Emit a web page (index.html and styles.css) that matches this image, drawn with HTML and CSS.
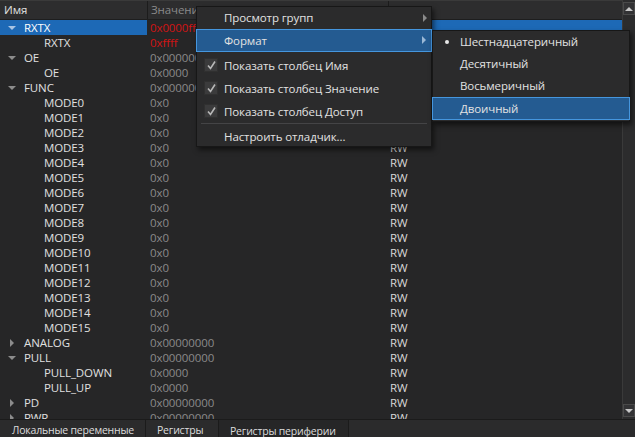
FILE: index.html
```html
<!DOCTYPE html>
<html>
<head>
<meta charset="utf-8">
<link rel="stylesheet" href="styles.css">
</head>
<body>
<div class="window">
  <div class="tree">
    <div class="main">
      <div class="header">
        <div class="hcell c-name">Имя</div>
        <div class="hcell c-val">Значение</div>
        <div class="hcell c-acc">Доступ</div>
      </div>
      <div class="rows">
        <div class="row sel"><div class="cell c-name l0"><span class="arr down"></span>RXTX</div><div class="cell c-val red">0x0000ffff</div><div class="cell c-acc">RW</div></div>
        <div class="row"><div class="cell c-name l1">RXTX</div><div class="cell c-val red">0xffff</div><div class="cell c-acc">RW</div></div>
        <div class="row"><div class="cell c-name l0"><span class="arr down"></span>OE</div><div class="cell c-val">0x00000000</div><div class="cell c-acc">RW</div></div>
        <div class="row"><div class="cell c-name l1">OE</div><div class="cell c-val">0x0000</div><div class="cell c-acc">RW</div></div>
        <div class="row"><div class="cell c-name l0"><span class="arr down"></span>FUNC</div><div class="cell c-val">0x00000000</div><div class="cell c-acc">RW</div></div>
        <div class="row"><div class="cell c-name l1">MODE0</div><div class="cell c-val">0x0</div><div class="cell c-acc">RW</div></div>
        <div class="row"><div class="cell c-name l1">MODE1</div><div class="cell c-val">0x0</div><div class="cell c-acc">RW</div></div>
        <div class="row"><div class="cell c-name l1">MODE2</div><div class="cell c-val">0x0</div><div class="cell c-acc">RW</div></div>
        <div class="row"><div class="cell c-name l1">MODE3</div><div class="cell c-val">0x0</div><div class="cell c-acc">RW</div></div>
        <div class="row"><div class="cell c-name l1">MODE4</div><div class="cell c-val">0x0</div><div class="cell c-acc">RW</div></div>
        <div class="row"><div class="cell c-name l1">MODE5</div><div class="cell c-val">0x0</div><div class="cell c-acc">RW</div></div>
        <div class="row"><div class="cell c-name l1">MODE6</div><div class="cell c-val">0x0</div><div class="cell c-acc">RW</div></div>
        <div class="row"><div class="cell c-name l1">MODE7</div><div class="cell c-val">0x0</div><div class="cell c-acc">RW</div></div>
        <div class="row"><div class="cell c-name l1">MODE8</div><div class="cell c-val">0x0</div><div class="cell c-acc">RW</div></div>
        <div class="row"><div class="cell c-name l1">MODE9</div><div class="cell c-val">0x0</div><div class="cell c-acc">RW</div></div>
        <div class="row"><div class="cell c-name l1">MODE10</div><div class="cell c-val">0x0</div><div class="cell c-acc">RW</div></div>
        <div class="row"><div class="cell c-name l1">MODE11</div><div class="cell c-val">0x0</div><div class="cell c-acc">RW</div></div>
        <div class="row"><div class="cell c-name l1">MODE12</div><div class="cell c-val">0x0</div><div class="cell c-acc">RW</div></div>
        <div class="row"><div class="cell c-name l1">MODE13</div><div class="cell c-val">0x0</div><div class="cell c-acc">RW</div></div>
        <div class="row"><div class="cell c-name l1">MODE14</div><div class="cell c-val">0x0</div><div class="cell c-acc">RW</div></div>
        <div class="row"><div class="cell c-name l1">MODE15</div><div class="cell c-val">0x0</div><div class="cell c-acc">RW</div></div>
        <div class="row"><div class="cell c-name l0"><span class="arr right"></span>ANALOG</div><div class="cell c-val">0x00000000</div><div class="cell c-acc">RW</div></div>
        <div class="row"><div class="cell c-name l0"><span class="arr down"></span>PULL</div><div class="cell c-val">0x00000000</div><div class="cell c-acc">RW</div></div>
        <div class="row"><div class="cell c-name l1">PULL_DOWN</div><div class="cell c-val">0x0000</div><div class="cell c-acc">RW</div></div>
        <div class="row"><div class="cell c-name l1">PULL_UP</div><div class="cell c-val">0x0000</div><div class="cell c-acc">RW</div></div>
        <div class="row"><div class="cell c-name l0"><span class="arr right"></span>PD</div><div class="cell c-val">0x00000000</div><div class="cell c-acc">RW</div></div>
        <div class="row"><div class="cell c-name l0"><span class="arr right"></span>PWR</div><div class="cell c-val">0x00000000</div><div class="cell c-acc">RW</div></div>
      </div>
    </div>
    <div class="scrollbar">
      <div class="sbtn"><span class="tri-up"></span></div>
      <div class="track"></div>
      <div class="sbtn"><span class="tri-down"></span></div>
    </div>
  </div>
  <div class="tabs">
    <div class="tab t1">Локальные переменные</div>
    <div class="tab t2">Регистры</div>
    <div class="tab t3 active">Регистры периферии</div>
    <div class="tab-rest"></div>
  </div>

  <div class="menu">
    <div class="mi h22">Просмотр групп<span class="sub-arr"></span></div>
    <div class="mi h23 hl">Формат<span class="sub-arr"></span></div>
    <div class="mi h23 gap"><span class="chk"><svg width="11" height="11" viewBox="0 0 11 11"><path d="M2 5.5 L4.5 8.5 L9 1.5" fill="none" stroke="#b8b8b8" stroke-width="1.6"/></svg></span>Показать столбец Имя</div>
    <div class="mi h23"><span class="chk"><svg width="11" height="11" viewBox="0 0 11 11"><path d="M2 5.5 L4.5 8.5 L9 1.5" fill="none" stroke="#b8b8b8" stroke-width="1.6"/></svg></span>Показать столбец Значение</div>
    <div class="mi h23"><span class="chk"><svg width="11" height="11" viewBox="0 0 11 11"><path d="M2 5.5 L4.5 8.5 L9 1.5" fill="none" stroke="#b8b8b8" stroke-width="1.6"/></svg></span>Показать столбец Доступ</div>
    <div class="sep"></div>
    <div class="mi h22">Настроить отладчик...</div>
  </div>

  <div class="submenu">
    <div class="mi h22"><span class="dot"></span>Шестнадцатеричный</div>
    <div class="mi h22">Десятичный</div>
    <div class="mi h22">Восьмеричный</div>
    <div class="mi h23 hl">Двоичный</div>
  </div>
</div>
</body>
</html>
```

FILE: styles.css
```css
* { box-sizing: border-box; }
html, body {
  margin: 0;
  padding: 0;
  background: #262627;
  overflow: hidden;
}
body {
  font-family: "Open Sans", "Noto Sans", sans-serif;
  font-size: 11.5px;
  letter-spacing: -0.1px;
  color: #dcdcdc;
}
.window {
  position: relative;
  width: 635px;
  height: 437px;
  display: flex;
  flex-direction: column;
}
.tree {
  height: 420px;
  display: flex;
  border-bottom: 1px solid #1b1b1b;
}
.main {
  flex: 1;
  overflow: hidden;
  display: flex;
  flex-direction: column;
}
.header {
  height: 20px;
  display: grid;
  grid-template-columns: 147px 241px 1fr;
  background: #2d2d2e;
  border-top: 1px solid #3a3a3a;
  border-bottom: 1px solid #1e1e1e;
}
.hcell {
  line-height: 18px;
  padding-left: 4px;
  white-space: nowrap;
  overflow: hidden;
  color: #e2e2e2;
}
.hcell + .hcell {
  border-left: 1px solid #1c1c1c;
  padding-left: 3px;
}
.rows {
  display: flex;
  flex-direction: column;
}
.row {
  height: 15px;
  display: grid;
  grid-template-columns: 147px 241px 1fr;
  line-height: 15px;
  white-space: nowrap;
}
.cell { overflow: hidden; }
.c-name { color: #e0e0e0; position: relative; }
.l0 { padding-left: 24px; }
.l1 { padding-left: 44px; }
.c-val { color: #8a8a8a; padding-left: 3px; }
.c-val.red { color: #d21414; }
.c-acc { color: #d8d8d8; padding-left: 2px; }
.row.sel .c-name, .row.sel .c-acc { background: #1d69b6; color: #ffffff; }
.arr {
  position: absolute;
  width: 0; height: 0;
}
.arr.down {
  left: 8px; top: 6px;
  border-left: 4px solid transparent;
  border-right: 4px solid transparent;
  border-top: 4px solid #8c8c8c;
}
.row.sel .arr.down { border-top-color: #a8c4e4; }
.arr.right {
  left: 10px; top: 4px;
  border-top: 4px solid transparent;
  border-bottom: 4px solid transparent;
  border-left: 4px solid #8c8c8c;
}
.scrollbar {
  width: 13px;
  display: flex;
  flex-direction: column;
  background: #2c2c2d;
  border-left: 1px solid #3a3a3a;
  padding: 2px 0 2px 0;
}
.sbtn {
  height: 13px;
  background: #333335;
  border: 1px solid #4a4a4a;
  display: flex;
  align-items: center;
  justify-content: center;
}
.track { flex: 1; }
.tri-up {
  width: 0; height: 0;
  border-left: 4px solid transparent;
  border-right: 4px solid transparent;
  border-bottom: 4px solid #c8c8c8;
}
.tri-down {
  width: 0; height: 0;
  border-left: 4px solid transparent;
  border-right: 4px solid transparent;
  border-top: 4px solid #c8c8c8;
}
.tabs {
  flex: 1;
  display: flex;
  background: #2b2b2c;
  font-size: 10.5px;
  letter-spacing: -0.2px;
}
.tab {
  height: 17px;
  line-height: 21px;
  white-space: nowrap;
  color: #dcdcdc;
  border-right: 1px solid #1b1b1b;
}
.t1 { width: 146px; padding-left: 12px; }
.t2 { width: 73px; padding-left: 11px; }
.t3 { width: 130px; padding-left: 11px; line-height: 23px; }
.tab.active { background: #262627; }
.tab-rest { flex: 1; }

.menu, .submenu {
  position: absolute;
  background: #2b2b2c;
  border: 1px solid #171717;
  box-shadow: 2px 3px 5px rgba(0,0,0,0.55);
  color: #e2e2e2;
}
.menu {
  left: 196px;
  top: 6px;
  width: 236px;
  height: 141px;
}
.submenu {
  left: 432px;
  top: 30px;
  width: 198px;
  height: 92px;
}
.mi {
  position: relative;
  white-space: nowrap;
  padding-left: 27px;
}
.submenu .mi { padding-left: 27px; }
.h22 { height: 22px; line-height: 22px; }
.h23 { height: 23px; line-height: 23px; }
.gap { margin-top: 2px; }
.mi.hl {
  background: #245b91;
  border: 1px solid #4596de;
  margin: 0 -1px;
  padding-left: 27px;
  line-height: 21px;
}
.sub-arr {
  position: absolute;
  right: 4px;
  top: 7px;
  width: 0; height: 0;
  border-top: 4px solid transparent;
  border-bottom: 4px solid transparent;
  border-left: 4px solid #8a8a8a;
}
.mi.hl .sub-arr { top: 6px; right: 5px; border-left-color: #9ab8d6; }
.chk {
  position: absolute;
  left: 7px;
  top: 4px;
  width: 14px;
  height: 14px;
  background: #3b3b3c;
  border: 1px solid #303030;
  display: flex;
  align-items: center;
  justify-content: center;
}
.sep {
  height: 3px;
  margin: 0 4px;
  border-top: 1px solid #444446;
}
.dot {
  position: absolute;
  left: 12px;
  top: 9px;
  width: 4px;
  height: 4px;
  border-radius: 50%;
  background: #e8e8e8;
}
```
